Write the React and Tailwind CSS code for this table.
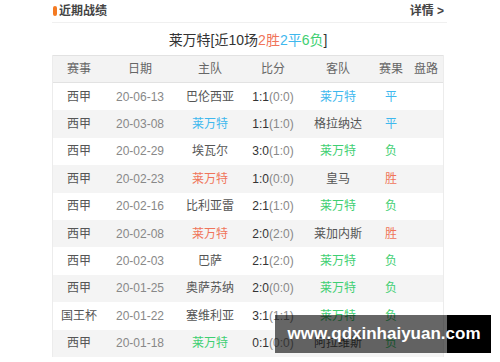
import React from "react";

const BLUE = "text-[#3fb8ee]";
const RED = "text-[#f0745a]";
const GREEN = "text-[#3fcf72]";

const rows = [
  { lg: "西甲", d: "20-06-13", h: "巴伦西亚", hc: "", s: "1:1", hs: "(0:0)", a: "莱万特", ac: BLUE, r: "平", rc: BLUE },
  { lg: "西甲", d: "20-03-08", h: "莱万特", hc: BLUE, s: "1:1", hs: "(1:0)", a: "格拉纳达", ac: "", r: "平", rc: BLUE },
  { lg: "西甲", d: "20-02-29", h: "埃瓦尔", hc: "", s: "3:0", hs: "(1:0)", a: "莱万特", ac: GREEN, r: "负", rc: GREEN },
  { lg: "西甲", d: "20-02-23", h: "莱万特", hc: RED, s: "1:0", hs: "(0:0)", a: "皇马", ac: "", r: "胜", rc: RED },
  { lg: "西甲", d: "20-02-16", h: "比利亚雷", hc: "", s: "2:1", hs: "(1:0)", a: "莱万特", ac: GREEN, r: "负", rc: GREEN },
  { lg: "西甲", d: "20-02-08", h: "莱万特", hc: RED, s: "2:0", hs: "(2:0)", a: "莱加内斯", ac: "", r: "胜", rc: RED },
  { lg: "西甲", d: "20-02-03", h: "巴萨", hc: "", s: "2:1", hs: "(2:0)", a: "莱万特", ac: GREEN, r: "负", rc: GREEN },
  { lg: "西甲", d: "20-01-25", h: "奥萨苏纳", hc: "", s: "2:0", hs: "(0:0)", a: "莱万特", ac: GREEN, r: "负", rc: GREEN },
  { lg: "国王杯", d: "20-01-22", h: "塞维利亚", hc: "", s: "3:1", hs: "(1:1)", a: "莱万特", ac: GREEN, r: "负", rc: GREEN },
  { lg: "西甲", d: "20-01-18", h: "莱万特", hc: GREEN, s: "0:1", hs: "(0:0)", a: "阿拉维斯", ac: "", r: "负", rc: GREEN },
];

const cols = "grid grid-cols-[52px_70px_70px_56px_74px_32px_38px] items-center text-center";

export default function App() {
  return (
    <div
      className="relative w-[500px] h-[362px] bg-white overflow-hidden"
      style={{ fontFamily: '"Liberation Sans", "Noto Sans CJK SC", sans-serif' }}
    >
      <div className="ml-[52px] w-[395px]">
        <div className="flex items-center justify-between h-[23px] border-b border-[#f0f0f0] pb-[1px]">
          <div className="flex items-center gap-[2px]">
            <span className="w-[4px] h-[10px] rounded-[2px] bg-[#f47a22] ml-[1px]" />
            <span className="text-[12px] font-bold text-[#444]">近期战绩</span>
          </div>
          <span className="text-[12px] font-bold text-[#444] mr-[3px]">详情 &gt;</span>
        </div>
        <div className="h-[32px] flex items-center justify-center text-[14px] text-[#333] pt-[3px] pr-[3px]">
          <span>莱万特[近10场</span>
          <span className="text-[#f0745a]">2胜</span>
          <span className="text-[#3fb8ee]">2平</span>
          <span className="text-[#3fcf72]">6负</span>
          <span>]</span>
        </div>
        <div className="w-[392px] border-x border-[#ececec]">
          <div className={`${cols} h-[28px] bg-[#f3f3f3] border-t border-b border-[#e2e2e2] text-[12px] text-[#666]`}>
            <span>赛事</span>
            <span>日期</span>
            <span>主队</span>
            <span>比分</span>
            <span>客队</span>
            <span>赛果</span>
            <span>盘路</span>
          </div>
          {rows.map((r, i) => (
            <div
              key={i}
              className={`${cols} h-[27.4px] text-[12px] ${i % 2 === 1 ? "bg-[#f4f4f4]" : "bg-white"}`}
            >
              <span className="text-[#555]">{r.lg}</span>
              <span className="text-[#888]">{r.d}</span>
              <span className={r.hc || "text-[#555]"}>{r.h}</span>
              <span className="text-[#333]">
                {r.s}
                <span className="text-[#888]">{r.hs}</span>
              </span>
              <span className={r.ac || "text-[#555]"}>{r.a}</span>
              <span className={r.rc}>{r.r}</span>
              <span />
            </div>
          ))}
        </div>
      </div>
      <div className="absolute left-[275px] top-[315px] w-[216px] h-[38px] flex">
        <div className="w-[172px] h-full bg-[rgba(0,0,0,0.6)]" />
        <div className="w-[44px] h-full bg-black" />
        <span className="absolute inset-0 flex items-center justify-center text-white font-bold text-[17px] pl-[2px]">
          www.qdxinhaiyuan.com
        </span>
      </div>
    </div>
  );
}
